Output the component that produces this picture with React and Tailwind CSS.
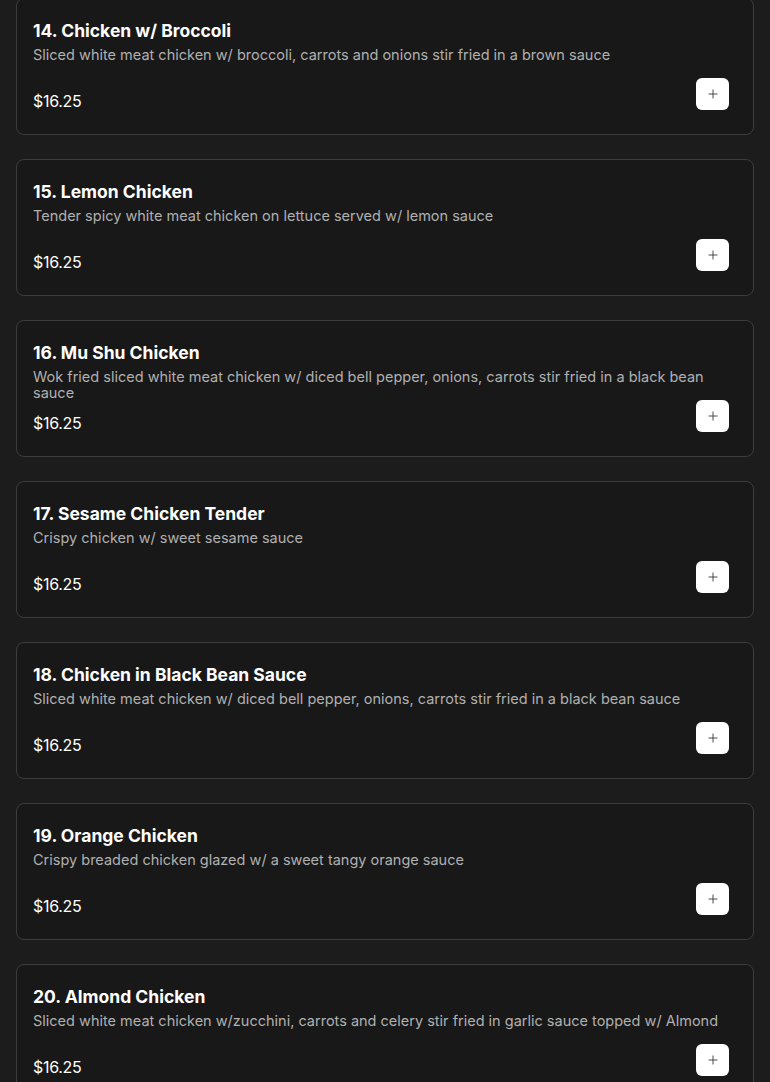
import React from "react";
import { Plus } from "lucide-react";

const items = [
  { n: "14. Chicken w/ Broccoli", d: "Sliced white meat chicken w/ broccoli, carrots and onions stir fried in a brown sauce" },
  { n: "15. Lemon Chicken", d: "Tender spicy white meat chicken on lettuce served w/ lemon sauce" },
  { n: "16. Mu Shu Chicken", d: "Wok fried sliced white meat chicken w/ diced bell pepper, onions, carrots stir fried in a black bean sauce" },
  { n: "17. Sesame Chicken Tender", d: "Crispy chicken w/ sweet sesame sauce" },
  { n: "18. Chicken in Black Bean Sauce", d: "Sliced white meat chicken w/ diced bell pepper, onions, carrots stir fried in a black bean sauce" },
  { n: "19. Orange Chicken", d: "Crispy breaded chicken glazed w/ a sweet tangy orange sauce" },
  { n: "20. Almond Chicken", d: "Sliced white meat chicken w/zucchini, carrots and celery stir fried in garlic sauce topped w/ Almond" },
];

export default function App() {
  return (
    <div
      className="min-h-screen bg-[#1c1c1c] px-4 pb-6"
      style={{ fontFamily: "Inter, 'Liberation Sans', sans-serif" }}
    >
      <div className="-mt-[2px] flex flex-col gap-6">
        {items.map((it) => (
          <div
            key={it.n}
            className="flex flex-col rounded-lg border border-[#3d3d3d] bg-[#181818] pl-4 pr-6 pt-[18px] pb-[19px]"
          >
            <div className="h-7 text-[17.5px] font-bold leading-7 text-white">{it.n}</div>
            <div className="mt-[2px] min-h-8 text-[14.5px] leading-4 text-[#b0b0b0]">{it.d}</div>
            <div className="-mt-[1px] flex items-start justify-between">
              <div className="mt-[9px] text-[16px] leading-7 tracking-[-0.3px] text-white">$16.25</div>
              <button className="flex h-8 w-[33px] items-center justify-center rounded-md bg-white text-[#333]">
                <Plus size={14} strokeWidth={1.5} />
              </button>
            </div>
          </div>
        ))}
      </div>
    </div>
  );
}
